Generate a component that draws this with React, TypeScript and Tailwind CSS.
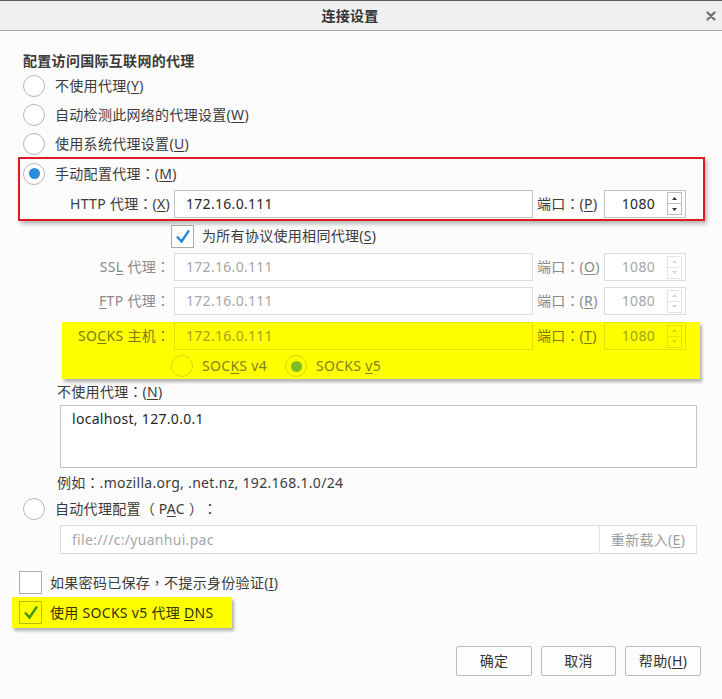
import React from "react";

const U = ({ children }: { children: React.ReactNode }) => (
  <span className="underline decoration-1 underline-offset-[2px]">{children}</span>
);

const Colon = () => (
  <span className="inline-block w-[14px] text-center leading-none tracking-normal font-['Noto_Sans_CJK_TC',sans-serif]">：</span>
);
const Comma = () => (
  <span className="inline-block w-[14px] text-center leading-none tracking-normal font-['Noto_Sans_CJK_TC',sans-serif]">，</span>
);
const LParen = () => <span className="inline-block w-[14px] text-right leading-none">（</span>;
const RParen = () => <span className="inline-block w-[14px] text-left leading-none">）</span>;

function Radio({ checked = false, yellow = false }: { checked?: boolean; yellow?: boolean }) {
  const ring = yellow ? "border-[#d8d800] bg-[#ffff00]" : "border-[#b6b6b6] bg-white";
  const dot = yellow ? "bg-[#7ebd28]" : "bg-[#2a8bd8]";
  return (
    <div className={`w-[22px] h-[22px] rounded-full border ${ring} flex items-center justify-center shrink-0`}>
      {checked && <div className={`w-[11px] h-[11px] rounded-full ${dot}`} />}
    </div>
  );
}

function Checkbox({ checked = false, yellow = false }: { checked?: boolean; yellow?: boolean }) {
  const box = yellow ? "border-[#bcbc00] bg-[#ffff00]" : "border-[#ababab] bg-white";
  const stroke = yellow ? "#3f9a10" : "#2b8ad6";
  return (
    <div className={`w-[23px] h-[23px] border ${box} flex items-center justify-center shrink-0`}>
      {checked && (
        <svg width="21" height="21" viewBox="0 0 21 21">
          <polyline points="5,10.5 9.5,15.5 17,4.5" fill="none" stroke={stroke} strokeWidth="2.4" strokeLinejoin="miter" />
        </svg>
      )}
    </div>
  );
}

function Spinner({ disabled = false, yellow = false }: { disabled?: boolean; yellow?: boolean }) {
  const border = yellow ? "border-[#e6e600]" : disabled ? "border-[#e4e4e4]" : "border-[#bcbcbc]";
  const fill = yellow ? "#d8d800" : disabled ? "#d4d4d4" : "#333333";
  return (
    <div className={`w-[15px] h-[23px] flex flex-col border ${border} shrink-0`}>
      <div className={`flex-1 flex items-center justify-center border-b ${border}`}>
        <svg width="5" height="3" viewBox="0 0 5 3">
          <path d="M0 3 L2.5 0 L5 3 Z" fill={fill} />
        </svg>
      </div>
      <div className="flex-1 flex items-center justify-center">
        <svg width="5" height="3" viewBox="0 0 5 3">
          <path d="M0 0 L5 0 L2.5 3 Z" fill={fill} />
        </svg>
      </div>
    </div>
  );
}

type RowProps = {
  labelW: string;
  label: React.ReactNode;
  portLabel: React.ReactNode;
  value: string;
  disabled?: boolean;
  yellow?: boolean;
};

function ProxyRow({ labelW, label, portLabel, value, disabled = false, yellow = false }: RowProps) {
  const labelColor = yellow ? "text-[#7c7c0c]" : disabled ? "text-[#8a8a8a]" : "text-[#3b3b3b]";
  const inputBorder = yellow ? "border-[#e2e200] bg-[#ffff00]" : disabled ? "border-[#dcdcdc] bg-white" : "border-[#c2c2c2] bg-white";
  const valueColor = yellow ? "text-[#a2a21e]" : disabled ? "text-[#a6a6a6]" : "text-[#262626]";
  return (
    <div className="flex items-center h-[28px]">
      <div className={`${labelW} text-right whitespace-nowrap ${labelColor}`}>{label}</div>
      <div className={`ml-[4px] w-[359px] h-[28px] border ${inputBorder} flex items-center pl-[11px] ${valueColor}`}>
        {value}
      </div>
      <div className={`ml-[4px] w-[67px] whitespace-nowrap ${labelColor}`}>{portLabel}</div>
      <div className={`w-[82px] h-[28px] border ${inputBorder} flex items-center`}>
        <div className={`flex-1 text-right pr-[12px] ${valueColor}`}>1080</div>
        <div className="mr-[3px]">
          <Spinner disabled={disabled} yellow={yellow} />
        </div>
      </div>
    </div>
  );
}

function RadioRow({ children, h = "h-[29px]" }: { children: React.ReactNode; h?: string }) {
  return (
    <div className={`flex items-center ${h} ml-[23px]`}>
      <Radio />
      <div className="ml-[10px] text-[#3b3b3b] whitespace-nowrap">{children}</div>
    </div>
  );
}

export default function App() {
  return (
    <div className="w-[722px] h-[699px] overflow-hidden bg-[#fcfcfc] flex flex-col font-['Noto_Sans','Noto_Sans_CJK_SC',sans-serif] text-[14px] leading-[20px] tracking-[0.3px] text-[#3b3b3b]">
      {/* Title bar */}
      <div className="h-[31px] shrink-0 flex items-center bg-[#f0f0f0] border-t border-t-[#5c5c5c] border-b border-b-[#a8a8a8]">
        <div className="flex-1 text-center font-bold text-[#333]">连接设置</div>
        <div className="w-[22px] flex items-center justify-center">
          <svg width="10" height="10" viewBox="0 0 10 10">
            <path d="M1.5 1.5 L8.5 8.5 M8.5 1.5 L1.5 8.5" stroke="#707070" strokeWidth="2.2" strokeLinecap="round" />
          </svg>
        </div>
      </div>

      {/* Body */}
      <div className="flex flex-col">
        <div className="mt-[20px] ml-[23px] font-bold text-[#3a3a3a]">配置访问国际互联网的代理</div>
        <RadioRow>
          不使用代理(<U>Y</U>)
        </RadioRow>
        <RadioRow>
          自动检测此网络的代理设置(<U>W</U>)
        </RadioRow>
        <RadioRow>
          使用系统代理设置(<U>U</U>)
        </RadioRow>

        {/* Red highlighted box */}
        <div className="mt-[-1px] ml-[18px] w-[687px] border-2 border-[#dc1c22] shadow-[2px_3px_4px_rgba(0,0,0,0.28)] flex flex-col">
          <div className="flex items-center h-[29px] pl-[3px]">
            <Radio checked />
            <div className="ml-[10px] whitespace-nowrap">
              手动配置代理<Colon />(<U>M</U>)
            </div>
          </div>
          <div className="h-[31px] flex items-center">
            <ProxyRow
              labelW="w-[150px]"
              label={
                <>
                  HTTP 代理<Colon />(<U>X</U>)
                </>
              }
              portLabel={
                <>
                  端口<Colon />(<U>P</U>)
                </>
              }
              value="172.16.0.111"
            />
          </div>
        </div>

        <div className="h-[30px] flex items-center ml-[171px]">
          <Checkbox checked />
          <div className="ml-[8px]">
            为所有协议使用相同代理(<U>S</U>)
          </div>
        </div>

        <div className="mt-[2px]">
          <ProxyRow
            labelW="w-[170px]"
            disabled
            label={
              <>
                SS<U>L</U> 代理<Colon />
              </>
            }
            portLabel={
              <>
                端口<Colon />(<U>O</U>)
              </>
            }
            value="172.16.0.111"
          />
        </div>
        <div className="mt-[6px]">
          <ProxyRow
            labelW="w-[170px]"
            disabled
            label={
              <>
                <U>F</U>TP 代理<Colon />
              </>
            }
            portLabel={
              <>
                端口<Colon />(<U>R</U>)
              </>
            }
            value="172.16.0.111"
          />
        </div>

        {/* Yellow highlighted SOCKS box */}
        <div className="mt-[7px] ml-[62px] w-[638px] bg-[#ffff00] shadow-[2px_3px_3px_rgba(0,0,0,0.3)] flex flex-col">
          <ProxyRow
            labelW="w-[108px]"
            disabled
            yellow
            label={
              <>
                SO<U>C</U>KS 主机<Colon />
              </>
            }
            portLabel={
              <>
                端口<Colon />(<U>T</U>)
              </>
            }
            value="172.16.0.111"
          />
          <div className="flex items-center pt-[5px] pb-[2px] ml-[109px] text-[#82821a]">
            <Radio yellow />
            <div className="ml-[9px]">
              SOC<U>K</U>S v4
            </div>
            <div className="ml-[18px]">
              <Radio yellow checked />
            </div>
            <div className="ml-[9px]">
              SOCKS <U>v</U>5
            </div>
          </div>
        </div>

        <div className="mt-[3px] ml-[57px]">
          不使用代理<Colon />(<U>N</U>)
        </div>
        <div className="mt-[3px] ml-[60px] w-[637px] h-[63px] border border-[#c4c4c4] bg-white pl-[11px] pt-[3px] text-[#262626]">
          localhost, 127.0.0.1
        </div>
        <div className="mt-[5px] ml-[57px]">
          例如<Colon />.mozilla.org, .net.nz, 192.168.1.0/24
        </div>

        <div className="mt-[2px]">
          <RadioRow h="h-[28px]">
            自动代理配置<LParen /> P<U>A</U>C <RParen />
            <Colon />
          </RadioRow>
        </div>
        <div className="mt-[2px] ml-[60px] w-[637px] h-[29px] border border-[#dcdcdc] bg-white flex items-center">
          <div className="flex-1 pl-[11px] text-[#a8a8a8]">file:///c:/yuanhui.pac</div>
          <div className="w-[97px] h-full border-l border-[#e2e2e2] flex items-center justify-center text-[#9c9c9c]">
            重新载入(<U>E</U>)
          </div>
        </div>

        <div className="mt-[17px] ml-[19px] h-[23px] flex items-center">
          <Checkbox />
          <div className="ml-[8px] whitespace-nowrap">
            如果密码已保存<Comma />不提示身份验证(<U>I</U>)
          </div>
        </div>

        <div className="mt-[3px] ml-[12px] w-[220px] h-[31px] bg-[#ffff00] shadow-[2px_3px_3px_rgba(0,0,0,0.3)] flex items-center pl-[7px]">
          <Checkbox checked yellow />
          <div className="ml-[8px] text-[#333300] whitespace-nowrap">
            使用 SOCKS v5 代理 <U>D</U>NS
          </div>
        </div>

        <div className="mt-[18px] flex justify-end gap-[9px] pr-[21px]">
          <button className="w-[76px] h-[30px] border border-[#b9b9b9] rounded-[2px] bg-[#fdfdfd] text-[#333]">确定</button>
          <button className="w-[75px] h-[30px] border border-[#b9b9b9] rounded-[2px] bg-[#fdfdfd] text-[#333]">取消</button>
          <button className="w-[76px] h-[30px] border border-[#b9b9b9] rounded-[2px] bg-[#fdfdfd] text-[#333]">
            帮助(<U>H</U>)
          </button>
        </div>
      </div>
    </div>
  );
}
